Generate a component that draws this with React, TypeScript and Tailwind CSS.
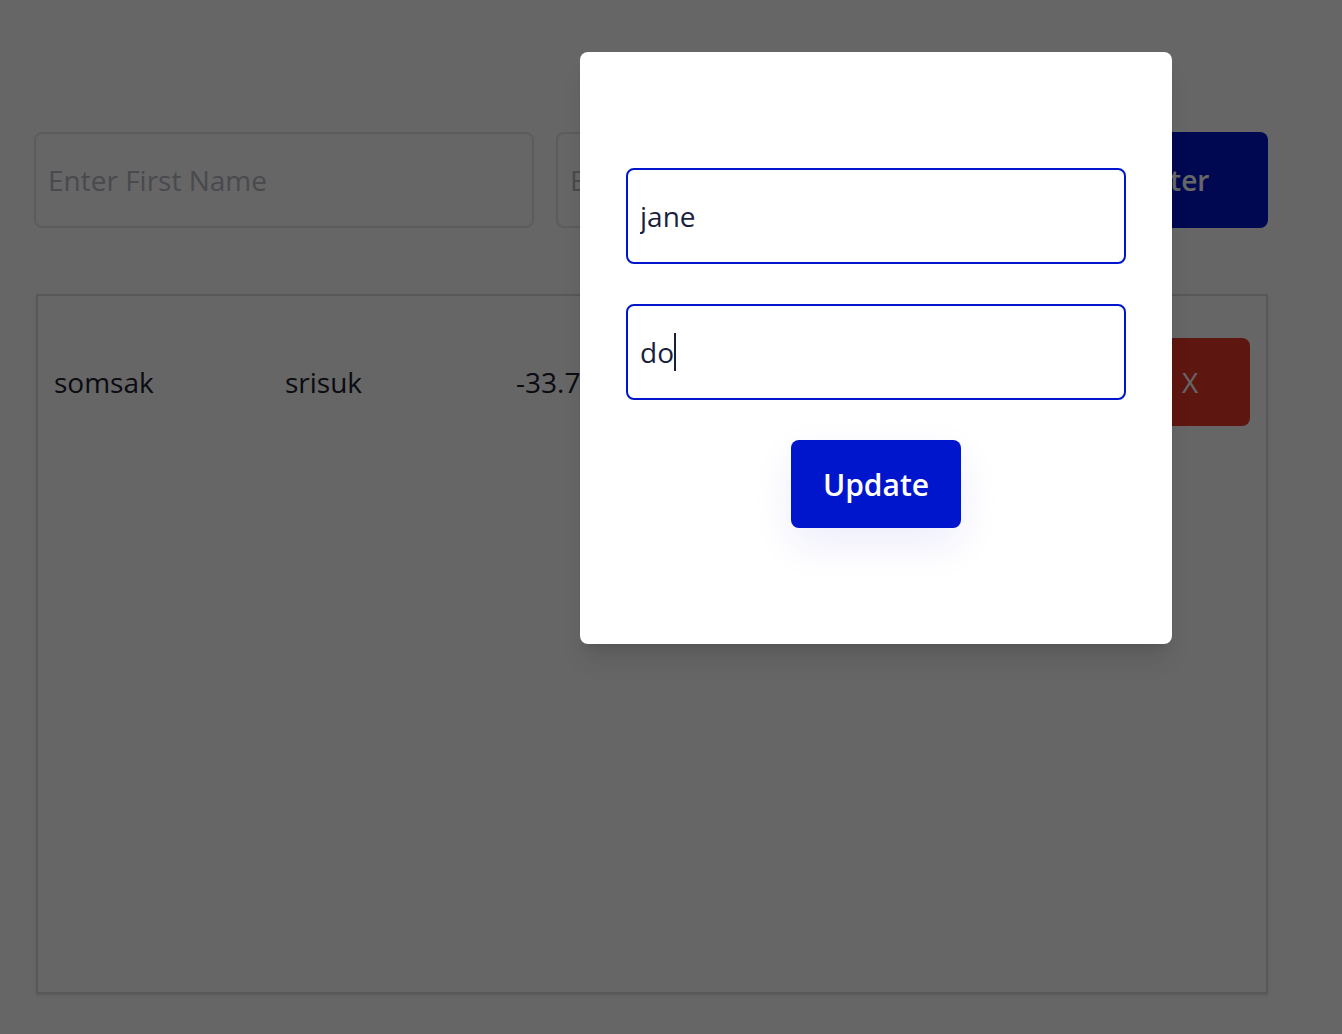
import { useState } from 'react';

const rows = [{ first: 'somsak', last: 'srisuk', lat: '-33.7', lng: '151.2' }];

export default function App() {
	const [first, setFirst] = useState('jane');
	const [last, setLast] = useState('do');

	return (
		<div className="relative min-h-[1034px] bg-white font-['Open_Sans',sans-serif] text-[#1a202c]">
			{/* Page */}
			<div className="flex flex-col gap-[66px] px-[34px] pt-[132px] pr-[74px]">
				<div className="flex gap-[22px]">
					<input
						placeholder="Enter First Name"
						className="h-[96px] w-[500px] rounded-lg border-2 border-[#e6e6ea] px-[12px] text-[28px] placeholder:text-[#b6b6c2] outline-none"
					/>
					<input
						placeholder="Enter Last Name"
						className="h-[96px] w-[500px] rounded-lg border-2 border-[#e6e6ea] px-[12px] text-[28px] placeholder:text-[#b6b6c2] outline-none"
					/>
					<button className="h-[96px] w-[190px] rounded-lg bg-[#0016cc] text-[28px] font-semibold text-white">
						Enter
					</button>
				</div>

				<div className="ml-[2px] h-[700px] border-2 border-[#dcdcdc] p-[42px_16px_0_16px] shadow-sm">
					{rows.map((r, i) => (
						<div key={i} className="flex h-[88px] items-center text-[28px]">
							<span className="w-[231px]">{r.first}</span>
							<span className="w-[231px]">{r.last}</span>
							<span className="w-[231px]">{r.lat}</span>
							<span className="w-[231px]">{r.lng}</span>
							<div className="ml-auto flex gap-[20px]">
								<button className="h-[88px] w-[110px] rounded-lg bg-[#0016cc] text-[28px] text-white">Edit</button>
								<button className="h-[88px] w-[120px] rounded-lg bg-[#eb3728] text-[28px] text-white">X</button>
							</div>
						</div>
					))}
				</div>
			</div>

			{/* Overlay + modal */}
			<div className="absolute inset-0 bg-black/60">
				<div className="absolute left-[580px] top-[52px] flex h-[592px] w-[592px] flex-col items-center justify-center gap-[40px] rounded-lg bg-white shadow-xl">
					<input
						value={first}
						onChange={(e) => setFirst(e.target.value)}
						className="h-[96px] w-[500px] rounded-lg border-2 border-[#0016cc] px-[12px] text-[28px] text-[#1a1f3d] outline-none"
					/>
					<div className="relative">
						<input
							value={last}
							onChange={(e) => setLast(e.target.value)}
							className="h-[96px] w-[500px] rounded-lg border-2 border-[#0016cc] px-[12px] text-[28px] text-[#1a1f3d] outline-none"
						/>
						{/* caret */}
						<div className="pointer-events-none absolute inset-0 flex items-center px-[14px] text-[28px]">
							<span className="invisible">{last}</span>
							<span className="h-[38px] w-[2px] bg-[#1a1f3d]" />
						</div>
					</div>
					<button className="h-[88px] w-[170px] rounded-lg bg-[#0016cc] text-[30px] font-semibold text-white shadow-[0_16px_40px_rgba(0,22,204,0.08)]">
						Update
					</button>
				</div>
			</div>
		</div>
	);
}
